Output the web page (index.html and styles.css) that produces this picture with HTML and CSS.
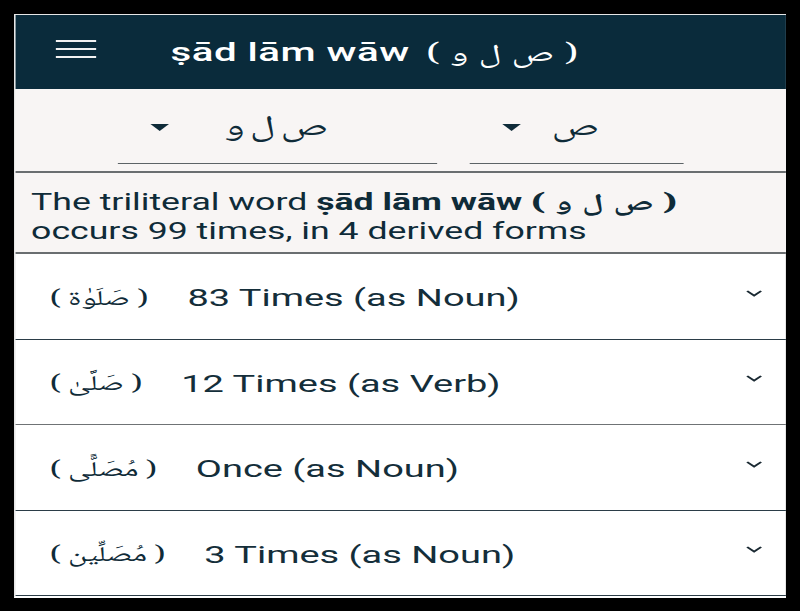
FILE: index.html
```html
<!DOCTYPE html>
<html>
<head>
<meta charset="utf-8"/>
<meta name="viewport" content="width=device-width, initial-scale=1.0" />
<link rel="stylesheet" href="styles.css">
</head>
<body>

<div class="screen">

<header class="topbar">
  <span class="menu"><i></i><i></i><i></i></span>
  <h1 class="title">ṣād lām wāw <span class="ar" dir="rtl">( ص ل و )</span></h1>
</header>

<section class="pickers">
  <div class="picker wide">
    <span class="caret"></span>
    <span class="picker-value ar" dir="rtl">ص ل و</span>
  </div>
  <div class="picker narrow">
    <span class="caret"></span>
    <span class="picker-value ar" dir="rtl">ص</span>
  </div>
</section>

<p class="summary">
The triliteral word <b>ṣād lām wāw <span class="ar" dir="rtl">( ص ل و )</span></b><br/>
occurs 99 times, in 4 derived forms
</p>

<ul class="forms">
  <li class="form">
    <span class="form-word ar" dir="rtl">( صَلَوٰة )</span>
    <span class="form-count">83 Times (as Noun)</span>
    <svg class="chev" viewBox="0 0 11 7"><polyline points="1,1 5.5,5.5 10,1"/></svg>
  </li>
  <li class="form">
    <span class="form-word ar" dir="rtl">( صَلَّىٰ )</span>
    <span class="form-count">12 Times (as Verb)</span>
    <svg class="chev" viewBox="0 0 11 7"><polyline points="1,1 5.5,5.5 10,1"/></svg>
  </li>
  <li class="form">
    <span class="form-word ar" dir="rtl">( مُصَلًّى )</span>
    <span class="form-count">Once (as Noun)</span>
    <svg class="chev" viewBox="0 0 11 7"><polyline points="1,1 5.5,5.5 10,1"/></svg>
  </li>
  <li class="form">
    <span class="form-word ar" dir="rtl">( مُصَلِّين )</span>
    <span class="form-count">3 Times (as Noun)</span>
    <svg class="chev" viewBox="0 0 11 7"><polyline points="1,1 5.5,5.5 10,1"/></svg>
  </li>
</ul>

</div>

</body>
</html>
```

FILE: styles.css
```css
/* the screenshot is stretched sideways, so the whole screen is scaled in x */
html, body {
  margin: 0px;
  padding: 0px;
  background: #000;
  height: 611px;
  overflow: hidden;
}

body {
  font-family: Roboto, "Noto Naskh Arabic", "Noto Sans Arabic", "DejaVu Sans", sans-serif;
  color: #0f2b38;
}

.ar {
  font-family: "Noto Naskh Arabic", "Noto Sans Arabic", "DejaVu Sans", sans-serif;
}

.screen {
  width: 497px;
  margin: 14px 0px 0px 14px;
  border-top: 1px solid #e6e6e6;
  border-left: 1px solid #e6e6e6;
  border-bottom: 2px solid #fff;
  background: #fff;
  transform: scaleX(1.55);
  transform-origin: 0 0;
}

/* top bar */
.topbar {
  height: 74px;
  background: #0a2b3b;
  display: flex;
  align-items: center;
  color: #fff;
}

.menu {
  display: flex;
  flex-direction: column;
  gap: 5.5px;
  width: 26px;
  margin-left: 26px;
  margin-top: -6px;
}
.menu i {
  display: block;
  height: 2.5px;
  background: #f2f2f2;
}

.title {
  margin: 6px 0px 0px 48px;
  font-size: 26px;
  font-weight: 500;
  letter-spacing: 0.3px;
}
.title .ar {
  font-weight: 400;
  font-size: 25px;
  word-spacing: 1px;
  margin-left: 4px;
}

/* root pickers */
.pickers {
  height: 84px;
  box-sizing: border-box;
  padding: 14px 66px 0px 66px;
  display: flex;
  gap: 21px;
  background: #f8f5f4;
  border-bottom: 2px solid #6a6e70;
}

.picker {
  height: 60px;
  display: flex;
  align-items: center;
  border-bottom: 1.5px solid #5d6366;
}
.picker.wide { width: 207px; }
.picker.narrow { width: 138px; }

.caret {
  width: 0px;
  height: 0px;
  margin-left: 21px;
  margin-bottom: 12px;
  border-left: 6.75px solid transparent;
  border-right: 6.75px solid transparent;
  border-top: 7px solid #0f2b38;
}

.picker-value {
  flex: 1;
  text-align: center;
  padding-right: 35px;
  margin-bottom: 8px;
  font-size: 28px;
  word-spacing: -3px;
}

/* summary */
.summary {
  margin: 0px;
  padding: 17px 10px 7px 10px;
  font-size: 23px;
  line-height: 26.5px;
  background: #f8f5f4;
  border-bottom: 2px solid #6a6e70;
}
.summary .ar {
  word-spacing: 1px;
}

/* derived forms */
.forms {
  list-style: none;
  margin: 0px;
  padding: 0px;
}

.form {
  height: 84.5px;
  display: flex;
  align-items: center;
  padding-left: 22px;
  padding-right: 15.5px;
  border-bottom: 1px solid #2b3d47;
}
.form:nth-child(2) {
  border-bottom: 1.5px solid #6f7375;
}

.form-word {
  font-size: 21px;
  padding-top: 8px;
  margin-right: 25px;
}

.form-count {
  flex: 1;
  font-size: 24.5px;
  padding-top: 3px;
  color: #142e3a;
}

.chev {
  width: 11px;
  height: 7px;
  margin-bottom: 6px;
}
.chev polyline {
  fill: none;
  stroke: #1b2a33;
  stroke-width: 1.6;
}
```
